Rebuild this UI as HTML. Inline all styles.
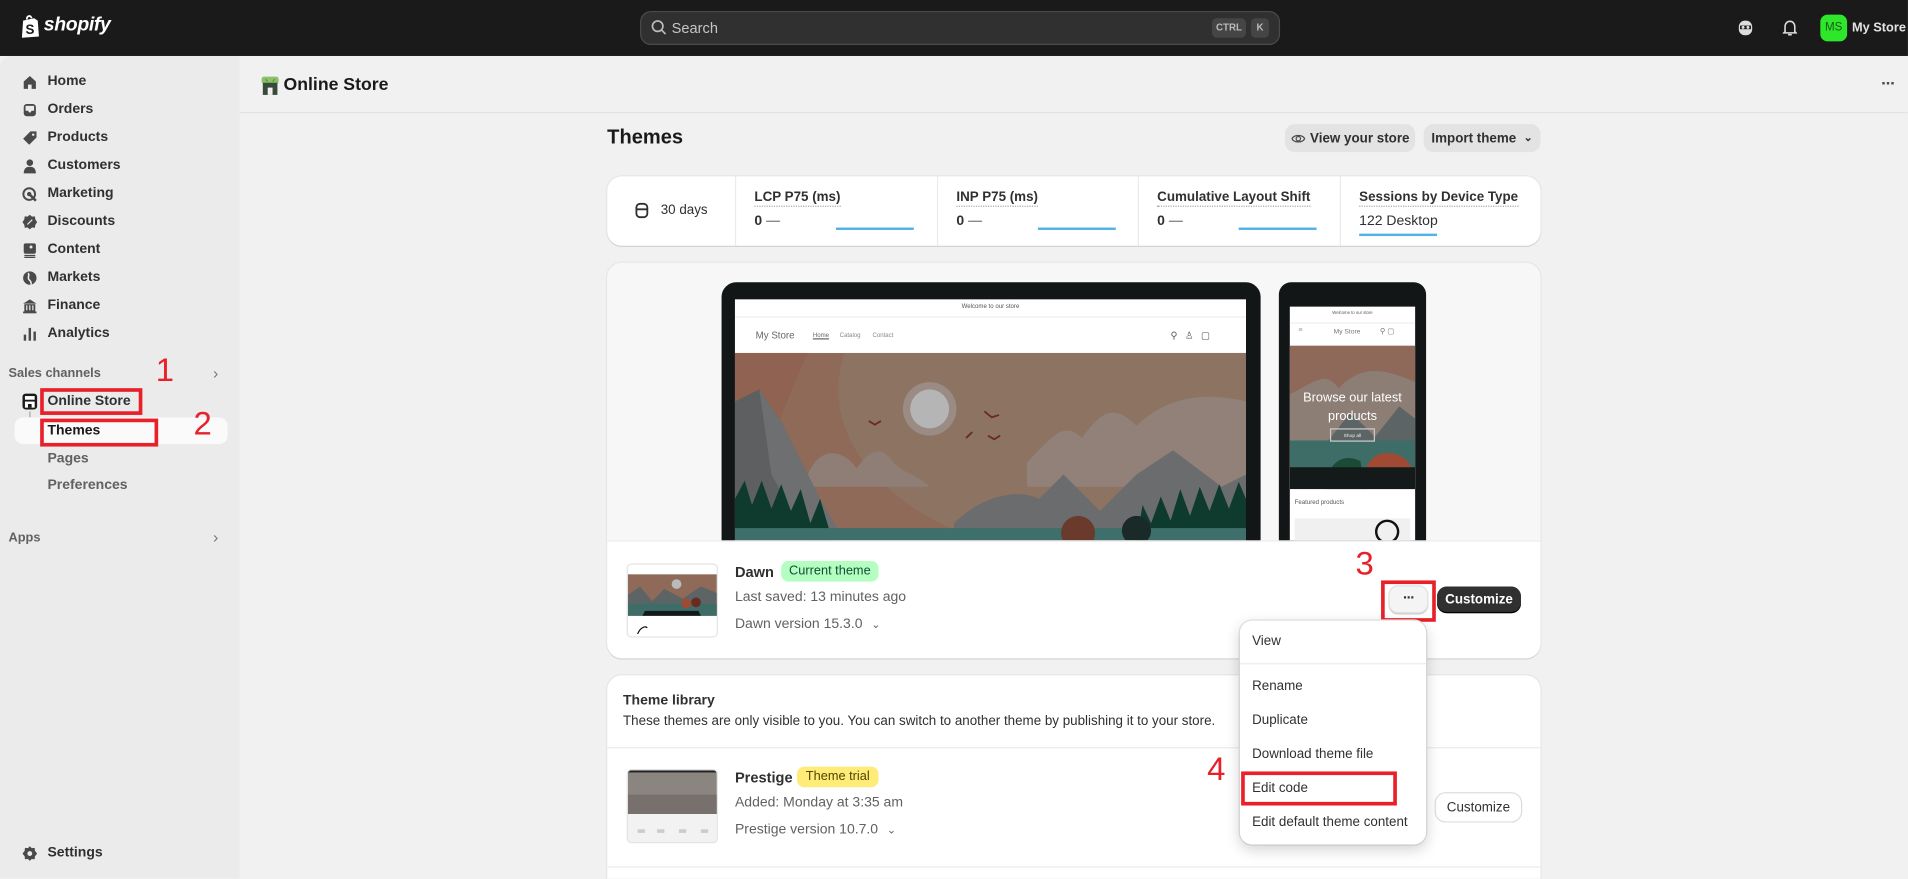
<!DOCTYPE html>
<html><head><meta charset="utf-8">
<style>
*{box-sizing:border-box;margin:0;padding:0}
html,body{width:1908px;height:878px;overflow:hidden;background:#f1f1f1}
#w{position:absolute;left:0;top:0;width:1568px;height:722px;transform:scale(1.2168);transform-origin:0 0;font-family:"Liberation Sans",Arial,sans-serif;color:#303030;font-size:12px;background:#f1f1f1;overflow:hidden}
#w div{white-space:nowrap}
.a{position:absolute}
.top{left:0;top:0;width:1568px;height:46px;background:#1a1a1a}
.side{left:0;top:46px;width:197px;height:676px;background:#ebebeb;border-top-left-radius:10px}
.nav{position:absolute;left:39px;font-size:11.5px;font-weight:bold;color:#303030}
.ic{position:absolute;left:18px;width:13px;height:13px}
.red{position:absolute;border:3px solid #e8202a}
.num{position:absolute;color:#e8202a;font-size:27px;font-family:"Liberation Sans",sans-serif}
.card{position:absolute;background:#fff;border-radius:12px;box-shadow:0 1px 0 #d4d4d4,0 0 0 1px #e6e6e6}
.lbl{position:absolute;font-size:11px;font-weight:bold;border-bottom:1px dotted #aaa;padding-bottom:1px}
.val{position:absolute;font-size:11.5px;font-weight:bold}
.bar{position:absolute;height:2px;background:#4fb3e8;width:64px}
.vdiv{position:absolute;top:0;width:1px;height:57px;background:#ebebeb}
.btn{position:absolute;border-radius:8px;font-size:11px;font-weight:bold;display:flex;align-items:center;justify-content:center}
.mi{position:absolute;left:10px;font-size:11px;color:#303030}
.t13{font-size:11.5px;color:#616161}
</style></head><body><div id="w">

<div class="a top">
 <svg class="a" style="left:17px;top:12px" width="16" height="20" viewBox="0 0 16 20"><path d="M2 5 L11 3 L14 5 L15 18 L1 19 Z" fill="#fff"/><path d="M5 4 C5 1 8 0 9 3" stroke="#fff" fill="none" stroke-width="1.4"/><text x="4" y="16" font-size="11" font-weight="bold" fill="#1a1a1a" font-family="Liberation Sans">S</text></svg>
 <div class="a" style="left:36px;top:12px;color:#fff;font-weight:bold;font-style:italic;font-size:16px;letter-spacing:-0.3px">shopify</div>
 <div class="a" style="left:526px;top:9px;width:526px;height:28px;background:#303030;border:1px solid #4a4a4a;border-radius:9px"></div>
 <svg class="a" style="left:535px;top:16px" width="13" height="13" viewBox="0 0 13 13"><circle cx="5.5" cy="5.5" r="4.3" stroke="#bbb" stroke-width="1.4" fill="none"/><path d="M8.7 8.7 L12 12" stroke="#bbb" stroke-width="1.4"/></svg>
 <div class="a" style="left:552px;top:16px;color:#c6c6c6;font-size:12px">Search</div>
 <div class="a" style="left:996px;top:15px;width:28px;height:16px;background:#454545;border-radius:4px;color:#bbb;font-size:8px;font-weight:bold;text-align:center;line-height:16px">CTRL</div>
 <div class="a" style="left:1028px;top:15px;width:15px;height:16px;background:#454545;border-radius:4px;color:#bbb;font-size:8px;font-weight:bold;text-align:center;line-height:16px">K</div>
 <svg class="a" style="left:1428px;top:16px" width="13" height="14" viewBox="0 0 13 14"><rect x="1" y="1" width="11" height="12" rx="5" fill="#ddd"/><rect x="2" y="5" width="9" height="3" fill="#1a1a1a"/><circle cx="4.5" cy="6.5" r="1.2" fill="#ddd"/><circle cx="8.5" cy="6.5" r="1.2" fill="#ddd"/></svg>
 <svg class="a" style="left:1465px;top:16px" width="12" height="14" viewBox="0 0 12 14"><path d="M2 10 L2 6 C2 3 4 1.5 6 1.5 C8 1.5 10 3 10 6 L10 10 L11 11 L1 11 Z" stroke="#ddd" stroke-width="1.3" fill="none"/><path d="M4.5 12.5 L7.5 12.5" stroke="#ddd" stroke-width="1.3"/></svg>
 <div class="a" style="left:1496px;top:12px;width:22px;height:22px;background:#2ee62a;border-radius:6px;color:#1a5a18;font-size:9.5px;text-align:center;line-height:22px">MS</div>
 <div class="a" style="left:1522px;top:17px;color:#e3e3e3;font-weight:bold;font-size:10.5px">My Store</div>
</div>

<div class="a side"></div>
<div class="a" style="left:0;top:46px;width:1568px;height:676px">
 <svg class="ic" style="top:15px" viewBox="0 0 13 13"><path d="M1.5 6 L6.5 1.5 L11.5 6 L11.5 12 L8 12 L8 8.5 L5 8.5 L5 12 L1.5 12 Z" fill="#4a4a4a"/></svg>
 <div class="nav" style="top:15px">Home</div>
 <svg class="ic" style="top:38px" viewBox="0 0 13 13"><rect x="1.5" y="1.5" width="10" height="10" rx="2.5" fill="#4a4a4a"/><path d="M3 7 L5 7 L6 8.5 L7 8.5 L8 7 L10 7 L10 3 L3 3Z" fill="#ebebeb"/></svg>
 <div class="nav" style="top:38px">Orders</div>
 <svg class="ic" style="top:61px" viewBox="0 0 13 13"><path d="M7 1 L12 1 L12 6 L6 12 L1 7 Z" fill="#4a4a4a"/><circle cx="9.3" cy="3.7" r="1" fill="#ebebeb"/></svg>
 <div class="nav" style="top:61px">Products</div>
 <svg class="ic" style="top:84px" viewBox="0 0 13 13"><circle cx="6.5" cy="3.7" r="2.7" fill="#4a4a4a"/><path d="M1.5 12.5 C1.5 8 4 7 6.5 7 C9 7 11.5 8 11.5 12.5Z" fill="#4a4a4a"/></svg>
 <div class="nav" style="top:84px">Customers</div>
 <svg class="ic" style="top:107px" viewBox="0 0 13 13"><circle cx="6" cy="6.5" r="4.8" stroke="#4a4a4a" stroke-width="1.6" fill="none"/><circle cx="6" cy="6.5" r="1.8" fill="#4a4a4a"/><path d="M7 7.5 L11.5 12" stroke="#4a4a4a" stroke-width="2"/></svg>
 <div class="nav" style="top:107px">Marketing</div>
 <svg class="ic" style="top:130px" viewBox="0 0 13 13"><path d="M6.5 0.5 L8.3 2 L10.7 1.8 L11 4.2 L12.5 6.5 L11 8.8 L10.7 11.2 L8.3 11 L6.5 12.5 L4.7 11 L2.3 11.2 L2 8.8 L0.5 6.5 L2 4.2 L2.3 1.8 L4.7 2Z" fill="#4a4a4a"/><path d="M4.5 8.5 L8.5 4.5" stroke="#ebebeb" stroke-width="1"/></svg>
 <div class="nav" style="top:130px">Discounts</div>
 <svg class="ic" style="top:153px" viewBox="0 0 13 13"><rect x="1.5" y="1" width="10" height="8.5" rx="1.5" fill="#4a4a4a"/><circle cx="7.5" cy="4" r="1.2" fill="#ebebeb"/><path d="M2 11 L11 11 M2 12.5 L11 12.5" stroke="#4a4a4a"/></svg>
 <div class="nav" style="top:153px">Content</div>
 <svg class="ic" style="top:176px" viewBox="0 0 13 13"><circle cx="6.5" cy="6.5" r="5.5" fill="#4a4a4a"/><path d="M5 2.5 C7 4 4 6 6 8 C7 9 8 10 7.5 12" stroke="#ebebeb" stroke-width="1.3" fill="none"/></svg>
 <div class="nav" style="top:176px">Markets</div>
 <svg class="ic" style="top:199px" viewBox="0 0 13 13"><path d="M1 4.5 L6.5 1 L12 4.5 Z" fill="#4a4a4a"/><rect x="2" y="5" width="9" height="6" fill="#4a4a4a"/><path d="M4 6 L4 10 M6.5 6 L6.5 10 M9 6 L9 10" stroke="#ebebeb"/><rect x="1" y="11" width="11" height="1.5" fill="#4a4a4a"/></svg>
 <div class="nav" style="top:199px">Finance</div>
 <svg class="ic" style="top:222px" viewBox="0 0 13 13"><rect x="1.5" y="7" width="2" height="5" fill="#4a4a4a"/><rect x="5.5" y="1.5" width="2" height="10.5" fill="#4a4a4a"/><rect x="9.5" y="4.5" width="2" height="7.5" fill="#4a4a4a"/></svg>
 <div class="nav" style="top:222px">Analytics</div>

 <div class="a" style="left:7px;top:255px;font-size:10.5px;font-weight:bold;color:#616161">Sales channels</div>
 <div class="a" style="left:175px;top:253px;color:#777;font-size:13px">›</div>
 <svg class="a" style="left:18px;top:277px" width="13" height="14" viewBox="0 0 13 14"><rect x="0.5" y="0.5" width="12" height="13" rx="2.5" fill="#1a1a1a"/><rect x="2.5" y="2.5" width="8" height="3" fill="#fff"/><rect x="2.5" y="7" width="8" height="5" fill="#fff"/><rect x="5" y="9" width="3" height="3" fill="#1a1a1a"/></svg>
 <div class="a" style="left:24px;top:292px;width:8px;height:14px;border-left:1px solid #999;border-bottom:1px solid #999;border-bottom-left-radius:4px"></div>
 <div class="a" style="left:12px;top:297px;width:175px;height:22px;background:#fafafa;border-radius:7px"></div>
 <div class="nav" style="top:278px">Online Store</div>
 <div class="nav" style="top:302px;color:#1a1a1a">Themes</div>
 <div class="nav" style="top:325px;color:#616161">Pages</div>
 <div class="nav" style="top:347px;color:#616161">Preferences</div>
 <div class="a" style="left:7px;top:390px;font-size:10.5px;font-weight:bold;color:#616161">Apps</div>
 <div class="a" style="left:175px;top:388px;color:#777;font-size:13px">›</div>
 <svg class="ic" style="top:649px" viewBox="0 0 13 13"><path d="M6.5 0.5 L8 2 L10.5 1.8 L10.7 4.2 L12.5 6.5 L10.7 8.8 L10.5 11.2 L8 11 L6.5 12.5 L5 11 L2.5 11.2 L2.3 8.8 L0.5 6.5 L2.3 4.2 L2.5 1.8 L5 2Z" fill="#4a4a4a"/><circle cx="6.5" cy="6.5" r="2" fill="#ebebeb"/></svg>
 <div class="nav" style="top:649px">Settings</div>

 <div class="red" style="left:33px;top:273px;width:84px;height:22px"></div>
 <div class="red" style="left:33px;top:298px;width:97px;height:23px"></div>
 <div class="num" style="left:128px;top:243px">1</div>
 <div class="num" style="left:159px;top:287px">2</div>
</div>

<div class="a" style="left:197px;top:92px;width:1371px;height:1px;background:#e3e3e3"></div>
<svg class="a" style="left:214px;top:62px" width="16" height="17" viewBox="0 0 16 17"><rect x="1" y="1" width="14" height="6" rx="2" fill="#8fbf6a"/><rect x="2" y="6" width="12" height="10" fill="#3a4a3a"/><rect x="6" y="10" width="4" height="6" fill="#f1f1f1"/><path d="M4 3 L6 5 M10 5 L12 3" stroke="#3da93d"/></svg>
<div class="a" style="left:233px;top:62px;font-size:14.5px;font-weight:bold;color:#1a1a1a">Online Store</div>
<div class="a" style="left:1546px;top:60px;font-size:14px;font-weight:bold;color:#4a4a4a;letter-spacing:-1px">···</div>

<div class="a" style="left:499px;top:104px;font-size:16.5px;font-weight:bold;color:#1a1a1a">Themes</div>
<div class="btn" style="left:1056px;top:102px;width:107px;height:23px;background:#e3e3e3">
 <svg width="12" height="12" viewBox="0 0 12 12" style="margin-right:4px"><path d="M0.8 6 C2.5 2.5 9.5 2.5 11.2 6 C9.5 9.5 2.5 9.5 0.8 6Z" stroke="#4a4a4a" fill="none"/><circle cx="6" cy="6" r="1.8" stroke="#4a4a4a" fill="none"/></svg>View your store</div>
<div class="btn" style="left:1170px;top:102px;width:96px;height:23px;background:#e3e3e3">Import theme <span style="margin-left:6px;font-size:9px">⌄</span></div>

<div class="card" style="left:499px;top:145px;width:767px;height:57px">
 <svg class="a" style="left:23px;top:21px" width="11" height="14" viewBox="0 0 11 14"><rect x="1" y="1.5" width="9" height="11" rx="3" stroke="#303030" stroke-width="1.5" fill="none"/><path d="M1 6 L10 6" stroke="#303030" stroke-width="1.5"/></svg>
 <div class="a" style="left:44px;top:22px;font-size:11px">30 days</div>
 <div class="vdiv" style="left:105px"></div><div class="vdiv" style="left:271px"></div><div class="vdiv" style="left:436px"></div><div class="vdiv" style="left:602px"></div>
 <div class="lbl" style="left:121px;top:11px">LCP P75 (ms)</div><div class="val" style="left:121px;top:31px">0 <span style="color:#8a8a8a">—</span></div><div class="bar" style="left:188px;top:42px"></div>
 <div class="lbl" style="left:287px;top:11px">INP P75 (ms)</div><div class="val" style="left:287px;top:31px">0 <span style="color:#8a8a8a">—</span></div><div class="bar" style="left:354px;top:42px"></div>
 <div class="lbl" style="left:452px;top:11px">Cumulative Layout Shift</div><div class="val" style="left:452px;top:31px">0 <span style="color:#8a8a8a">—</span></div><div class="bar" style="left:519px;top:42px"></div>
 <div class="lbl" style="left:618px;top:11px">Sessions by Device Type</div><div class="val" style="left:618px;top:31px;font-weight:normal;color:#303030">122 Desktop</div><div class="bar" style="left:618px;top:47px;width:64px"></div>
</div>

<div class="card" style="left:499px;top:216px;width:767px;height:325px;overflow:hidden">
 <div class="a" style="left:0;top:0;width:767px;height:228px;background:#f7f7f7"></div>
 <div class="a" style="left:94px;top:16px;width:443px;height:220px;background:#121616;border-radius:12px 12px 0 0"></div>
 <div class="a" style="left:105px;top:30px;width:420px;height:198px;background:#fff;overflow:hidden">
  <div class="a" style="left:0;top:3px;width:420px;text-align:center;font-size:5px;color:#555">Welcome to our store</div>
  <div class="a" style="left:0;top:14px;width:420px;height:1px;background:#eee"></div>
  <div class="a" style="left:17px;top:25px;font-size:8px;color:#666">My Store</div>
  <div class="a" style="left:64px;top:27px;font-size:5px;color:#666;text-decoration:underline">Home</div>
  <div class="a" style="left:86px;top:27px;font-size:5px;color:#888">Catalog</div>
  <div class="a" style="left:113px;top:27px;font-size:5px;color:#888">Contact</div>
  <div class="a" style="left:358px;top:25px;font-size:8px;color:#555;letter-spacing:6px">⚲♙▢</div>
  <svg class="a" style="left:0;top:44px" width="420" height="154" viewBox="0 0 420 154">
   <rect width="420" height="154" fill="#8f6a58"/>
   <path d="M90 0 C70 60 110 120 200 154 L420 154 L420 0Z" fill="#8d7362"/>
   <path d="M0 0 L60 0 C40 40 30 90 0 110Z" fill="#8f6252"/>
   <circle cx="160" cy="46" r="22" fill="#9a8c84"/><circle cx="160" cy="46" r="16" fill="#b5b5b5"/>
   <path d="M60 100 C70 75 90 80 100 95 C110 80 120 75 130 90 C140 100 150 100 160 110 L60 110Z" fill="#8e7e76"/>
   <path d="M240 90 C260 70 270 55 285 70 C300 50 310 40 330 60 C350 40 380 30 420 40 L420 110 L240 110Z" fill="#918178"/>
   <path d="M0 40 L20 30 L40 60 L60 110 L80 154 L0 154Z" fill="#5d5f60"/>
   <path d="M20 30 L40 60 L70 120 L90 154 L60 154 L30 100Z" fill="#6e6f70"/>
   <path d="M180 140 C200 120 230 110 250 120 L270 100 L300 130 L330 100 L360 80 L400 110 L420 100 L420 154 L180 154Z" fill="#6a6c6e"/>
   <path d="M0 120 L8 105 L14 125 L22 105 L30 128 L38 108 L46 130 L54 112 L62 140 L70 120 L80 154 L0 154Z" fill="#0f3b2e"/>
   <path d="M330 154 L335 125 L342 140 L350 118 L358 138 L366 112 L374 134 L382 110 L390 130 L398 108 L406 128 L414 106 L420 120 L420 154Z" fill="#0f3b2e"/>
   <rect x="0" y="144" width="420" height="10" fill="#3f6f6a"/>
   <circle cx="282" cy="148" r="14" fill="#6a3a2c"/><circle cx="330" cy="146" r="12" fill="#1a2a28"/>
   <path d="M110 56 l5 3 l5 -3 M205 48 l6 5 l6 -2 M190 70 l5 -5 M208 68 l5 3 l5 -3" stroke="#6a2a22" stroke-width="1.5" fill="none"/>
  </svg>
 </div>
 <div class="a" style="left:552px;top:16px;width:121px;height:220px;background:#121616;border-radius:10px 10px 0 0"></div>
 <div class="a" style="left:561px;top:36px;width:103px;height:192px;background:#fff;overflow:hidden">
  <div class="a" style="left:0;top:3px;width:103px;text-align:center;font-size:3.5px;color:#555">Welcome to our store</div>
  <div class="a" style="left:0;top:13px;width:103px;height:1px;background:#eee"></div>
  <div class="a" style="left:7px;top:17px;font-size:6px;color:#999">≡</div>
  <div class="a" style="left:36px;top:18px;font-size:5.5px;color:#777">My Store</div>
  <div class="a" style="left:74px;top:17px;font-size:6px;color:#777">⚲ ▢</div>
  <svg class="a" style="left:0;top:32px" width="103" height="118" viewBox="0 0 103 118">
   <rect width="103" height="118" fill="#8e6858"/>
   <path d="M0 40 C20 30 30 20 40 35 C55 20 70 15 103 30 L103 118 L0 118Z" fill="#8c7d75"/>
   <path d="M30 80 L50 55 L70 75 L90 50 L103 60 L103 118 L30 118Z" fill="#5c6466"/>
   <rect x="0" y="78" width="103" height="25" fill="#3e6d68"/>
   <path d="M60 118 C60 90 75 85 90 90 C100 95 103 105 103 118Z" fill="#a04a34"/>
   <path d="M30 118 C30 95 45 88 58 95 L62 118Z" fill="#1d4a36"/>
   <rect x="0" y="100" width="103" height="18" fill="#131a19"/>
  </svg>
  <div class="a" style="left:0;top:68px;width:103px;text-align:center;font-size:10.5px;color:#fff;line-height:15px;white-space:normal">Browse our latest products</div>
  <div class="a" style="left:33px;top:100px;width:37px;height:11px;border:1px solid #ccc;font-size:4px;color:#eee;text-align:center;line-height:9px">Shop all</div>
  <div class="a" style="left:4px;top:158px;font-size:5px;color:#555">Featured products</div>
  <div class="a" style="left:4px;top:174px;width:95px;height:20px;background:#f0f0f0"></div>
  <div class="a" style="left:70px;top:175px;width:20px;height:20px;border:2.5px solid #111;border-radius:50%"></div>
 </div>
 <div class="a" style="left:0;top:228px;width:767px;height:1px;background:#ebebeb"></div>
 <div class="a" style="left:0;top:229px;width:767px;height:96px;background:#fff"></div>
 <div class="a" style="left:16px;top:247px;width:75px;height:61px;border:1px solid #e3e3e3;border-radius:4px;background:#fff;overflow:hidden">
  <svg width="75" height="61" viewBox="0 0 75 61"><rect y="8" width="75" height="34" fill="#8f6a58"/><circle cx="40" cy="16" r="4" fill="#bbb"/><path d="M0 25 L10 18 L20 30 L30 20 L45 28 L60 18 L75 24 L75 42 L0 42Z" fill="#5c6466"/><rect y="32" width="75" height="10" fill="#3e6d68"/><path d="M12 42 L60 42 L58 38 L14 38Z" fill="#131a19"/><circle cx="48" cy="32" r="4" fill="#a04a34"/><circle cx="56" cy="31" r="4" fill="#6a2a22"/><path d="M8 57 C10 52 14 50 16 52" stroke="#111" fill="none"/></svg>
 </div>
 <div class="a" style="left:105px;top:247px;font-size:12px;font-weight:bold;color:#303030">Dawn</div>
 <div class="a" style="left:143px;top:245px;width:80px;height:17px;background:#b4fec2;border-radius:6px;font-size:10.5px;text-align:center;line-height:17px;color:#0c5132">Current theme</div>
 <div class="a t13" style="left:105px;top:269px">Last saved: 13 minutes ago</div>
 <div class="a t13" style="left:105px;top:291px">Dawn version 15.3.0 <span style="margin-left:4px;font-size:9px">⌄</span></div>
 <div class="a" style="left:642px;top:265px;width:33px;height:23px;background:#f4f4f4;border-radius:8px;box-shadow:0 1px 0 #ccc, inset 0 0 0 1px #e0e0e0;text-align:center;font-size:12px;font-weight:bold;line-height:20px;letter-spacing:-1px;color:#303030">···</div>
 <div class="btn" style="left:682px;top:266px;width:69px;height:22px;background:#303030;color:#fff;box-shadow:inset 0 -1px 0 #000">Customize</div>
</div>
<div class="red" style="left:1135px;top:477px;width:45px;height:34px"></div>
<div class="num" style="left:1114px;top:448px">3</div>

<div class="card" style="left:499px;top:555px;width:767px;height:200px">
 <div class="a" style="left:13px;top:15px;font-size:11.5px;font-weight:bold;color:#303030">Theme library</div>
 <div class="a" style="left:13px;top:32px;font-size:11px;color:#303030">These themes are only visible to you. You can switch to another theme by publishing it to your store.</div>
 <div class="a" style="left:0;top:59px;width:767px;height:1px;background:#ebebeb"></div>
 <div class="a" style="left:16px;top:77px;width:75px;height:61px;border:1px solid #e3e3e3;border-radius:4px;background:#f2f2f2;overflow:hidden">
  <svg width="75" height="61" viewBox="0 0 75 61"><rect width="75" height="2" fill="#222"/><rect y="2" width="75" height="34" fill="#8b8580"/><rect y="20" width="75" height="16" fill="#77706c"/><rect x="0" y="36" width="75" height="25" fill="#f2f2f2"/><path d="M8 50 h6 M24 50 h6 M42 50 h6 M60 50 h6" stroke="#ccc" stroke-width="3"/></svg>
 </div>
 <div class="a" style="left:105px;top:77px;font-size:12px;font-weight:bold">Prestige</div>
 <div class="a" style="left:156px;top:75px;width:67px;height:17px;background:#ffeb78;border-radius:6px;font-size:10.5px;text-align:center;line-height:17px;color:#4f4700">Theme trial</div>
 <div class="a t13" style="left:105px;top:99px">Added: Monday at 3:35 am</div>
 <div class="a t13" style="left:105px;top:121px">Prestige version 10.7.0 <span style="margin-left:4px;font-size:9px">⌄</span></div>
 <div class="btn" style="left:681px;top:97px;width:70px;height:23px;background:#fff;box-shadow:0 0 0 1px #ddd,0 1px 0 #bbb;font-weight:normal;color:#303030">Customize</div>
 <div class="a" style="left:0;top:157px;width:767px;height:1px;background:#ebebeb"></div>
</div>

<div class="a" style="left:1019px;top:510px;width:153px;height:184px;background:#fff;border-radius:10px;box-shadow:0 4px 12px rgba(0,0,0,0.18),0 0 0 1px #e6e6e6">
 <div class="mi" style="top:11px">View</div>
 <div class="a" style="left:0;top:35px;width:153px;height:1px;background:#ebebeb"></div>
 <div class="mi" style="top:48px">Rename</div>
 <div class="mi" style="top:76px">Duplicate</div>
 <div class="mi" style="top:104px">Download theme file</div>
 <div class="mi" style="top:132px">Edit code</div>
 <div class="mi" style="top:160px">Edit default theme content</div>
</div>
<div class="red" style="left:1020px;top:634px;width:128px;height:28px"></div>
<div class="num" style="left:992px;top:617px">4</div>

</div></body></html>
